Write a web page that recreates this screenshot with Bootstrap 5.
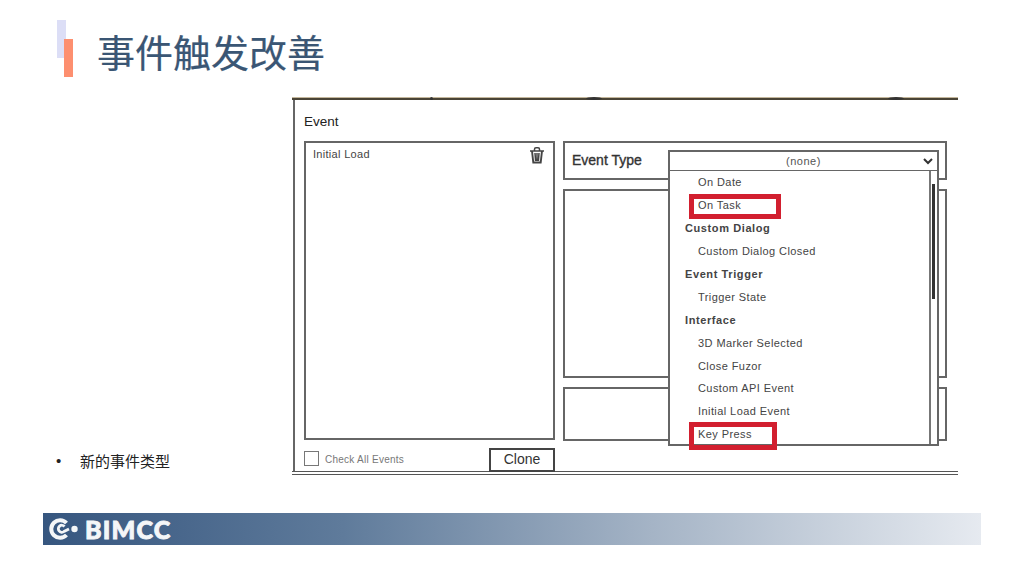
<!DOCTYPE html>
<html lang="zh">
<head>
<meta charset="utf-8">
<title>事件触发改善</title>
<link rel="stylesheet" href="https://cdn.jsdelivr.net/npm/bootstrap@5.3.0/dist/css/bootstrap.min.css">
<style>
html,body{margin:0;background:#fff;overflow:hidden}
.sld{width:1024px;height:576px;font-family:"Noto Sans CJK SC","Liberation Sans",sans-serif;color:#222}
.sld-head{height:98px;padding:20px 0 0 57px}
.acc-stack{width:16px;height:57px;position:relative}
.acc-a,.acc-b{position:absolute;width:9px;height:38px}
.acc-a{left:0;top:0;background:#dcdef6}
.acc-b{left:7px;top:19px;background:#fd8f6f}
.sld-title{font-size:38px;line-height:1;color:#3a5674;margin:12px 0 0 24px;font-weight:400;-webkit-text-stroke:.2px #3a5674}
.sld-main{height:377px}
.side-col{width:292px;padding:0 0 3px 56px;font-size:15px;color:#222}
.side-dot{width:24px;font-family:"Liberation Sans",sans-serif}
.dlg{width:666px;height:377px;border-top:2px solid #4a4436;box-shadow:0 -1px 0 #c4b79c;border-bottom:4px double #555;position:relative;font-family:"Liberation Sans",Arial,sans-serif;color:#333;padding:0 11px 0 12px}
.dlg-edge{position:absolute;left:1px;top:0;bottom:0;border-left:2px solid #666}
.speck{position:absolute;top:-3px;height:3px;background:#333;border-radius:50%}
.dlg-name{font-size:13.5px;line-height:16px;padding-top:14px;height:41px;color:#222}
.bx{border:2px solid #666;background:#fff}
.dlg-cols{gap:8px}
.list-col{width:251px}
.list-box{height:299px;padding:3px 8px 3px 7px;font-size:11px;letter-spacing:.3px;color:#444;line-height:16px}
.list-foot{padding-top:8px;height:33px}
.chk{width:15px;height:15px;border:1.5px solid #777;margin:3px 6px 0 0}
.chk-label{font-size:10px;color:#777;letter-spacing:.25px;margin-top:4px}
.clone-b{width:66px;height:24px;border:2px solid #444;border-radius:0;background:#fff;color:#333;font-size:14px;line-height:18px;padding:0 0 2px;margin-left:auto;font-family:inherit}
.right-col{width:384px}
.type-box{height:39px;padding-left:7px;font-size:14px;color:#333}
.type-box span{font-weight:400;-webkit-text-stroke:.35px #333;margin-top:7px}
.pane-a{height:189px;margin-top:9px}
.pane-b{height:54px;margin-top:9px}
.sel-wrap{position:absolute;left:376px;top:50px;width:271px}
.sel-head{height:22px;font-size:11px;letter-spacing:.5px;color:#555;text-align:center;line-height:18px;position:relative}
.sel-head svg{position:absolute;right:4px;top:6px}
.sel-menu{height:275px;border:2px solid #666;border-top:0;position:relative;margin-top:-1px}
.sel-bar{position:absolute;right:0;top:0;bottom:0;width:8px;border-left:2px solid #777}
.sel-thumb{position:absolute;left:1px;top:13px;width:3px;height:115px;background:#333}
.opt-row{height:22.95px;line-height:22.95px;font-size:11px;letter-spacing:.42px;color:#444;padding-left:28px;white-space:nowrap}
.opt-row.grp{padding-left:15px;font-weight:700;letter-spacing:.6px}
.red-a,.red-b{position:absolute;border:5px solid #d21f2f}
.red-a{left:19px;top:23px;width:92px;height:25px}
.red-b{left:19px;top:251px;width:88px;height:28px}
.sld-foot{margin:38px 43px 0;height:32px;background:linear-gradient(90deg,#36567f 0%,#5f7b9b 32%,#a5b4c6 65%,#e6eaf0 100%);padding-left:6px}
.brand{font-family:"Lato","Liberation Sans",sans-serif;font-weight:900;font-size:25px;color:#f4f6f8;line-height:32px;letter-spacing:1.200px;margin-left:6px;-webkit-text-stroke:.9px #f4f6f8}
</style>
</head>
<body>
<div class="sld d-flex flex-column">
  <header class="sld-head d-flex align-items-start">
    <div class="acc-stack flex-shrink-0"><div class="acc-a"></div><div class="acc-b"></div></div>
    <h1 class="sld-title">事件触发改善</h1>
  </header>
  <main class="sld-main d-flex">
    <div class="side-col d-flex align-items-end">
      <span class="side-dot">•</span><span>新的事件类型</span>
    </div>
    <section class="dlg">
      <div class="dlg-edge"></div>
      <span class="speck" style="left:138px;width:3px"></span>
      <span class="speck" style="left:294px;width:16px"></span>
      <span class="speck" style="left:596px;width:16px"></span>
      <div class="dlg-name">Event</div>
      <div class="d-flex dlg-cols">
        <div class="list-col">
          <div class="bx list-box d-flex justify-content-between">
            <span>Initial Load</span>
            <svg width="16" height="18" viewBox="0 0 16 18" fill="none" stroke="#444" stroke-width="1.500"><path d="M1 5h14M5.500 5V3.200Q5.500 1.800 7 1.800h2q1.500 0 1.500 1.400V5" /><path d="M3 5l1.300 11.500h7.400L13 5" stroke-width="1.900"/><path d="M6 7l.6 8M8 7v8M10 7l-.6 8"/></svg>
          </div>
          <div class="list-foot d-flex align-items-start">
            <span class="chk"></span><span class="chk-label">Check All Events</span>
            <button class="clone-b" type="button">Clone</button>
          </div>
        </div>
        <div class="right-col">
          <div class="bx type-box"><span class="d-inline-block">Event Type</span></div>
          <div class="bx pane-a"></div>
          <div class="bx pane-b"></div>
        </div>
      </div>
      <div class="sel-wrap">
        <div class="bx sel-head">(none)
          <svg width="10" height="7" viewBox="0 0 10 7" fill="none" stroke="#333" stroke-width="2"><path d="M1 1l4 4 4-4"/></svg>
        </div>
        <div class="sel-menu bg-white">
          <div class="opt-row">On Date</div>
          <div class="opt-row">On Task</div>
          <div class="opt-row grp">Custom Dialog</div>
          <div class="opt-row">Custom Dialog Closed</div>
          <div class="opt-row grp">Event Trigger</div>
          <div class="opt-row">Trigger State</div>
          <div class="opt-row grp">Interface</div>
          <div class="opt-row">3D Marker Selected</div>
          <div class="opt-row">Close Fuzor</div>
          <div class="opt-row">Custom API Event</div>
          <div class="opt-row">Initial Load Event</div>
          <div class="opt-row">Key Press</div>
          <div class="sel-bar"><div class="sel-thumb"></div></div>
          <div class="red-a"></div>
          <div class="red-b"></div>
        </div>
      </div>
    </section>
  </main>
  <footer class="sld-foot d-flex align-items-center">
    <svg width="30" height="22" viewBox="0 0 30 22" fill="none" stroke="#f4f6f8"><path d="M17.500 5A8.800 8.800 0 1 0 17.500 17" stroke-width="4"/><path d="M15.500 8.500A3.500 3.500 0 1 0 15 13.500L20 11" stroke-width="2.800"/><circle cx="25.500" cy="11" r="3.200" fill="#f4f6f8" stroke="none"/></svg>
    <span class="brand">BIMCC</span>
  </footer>
</div>
<script src="https://cdn.jsdelivr.net/npm/bootstrap@5.3.0/dist/js/bootstrap.bundle.min.js"></script>
</body>
</html>
